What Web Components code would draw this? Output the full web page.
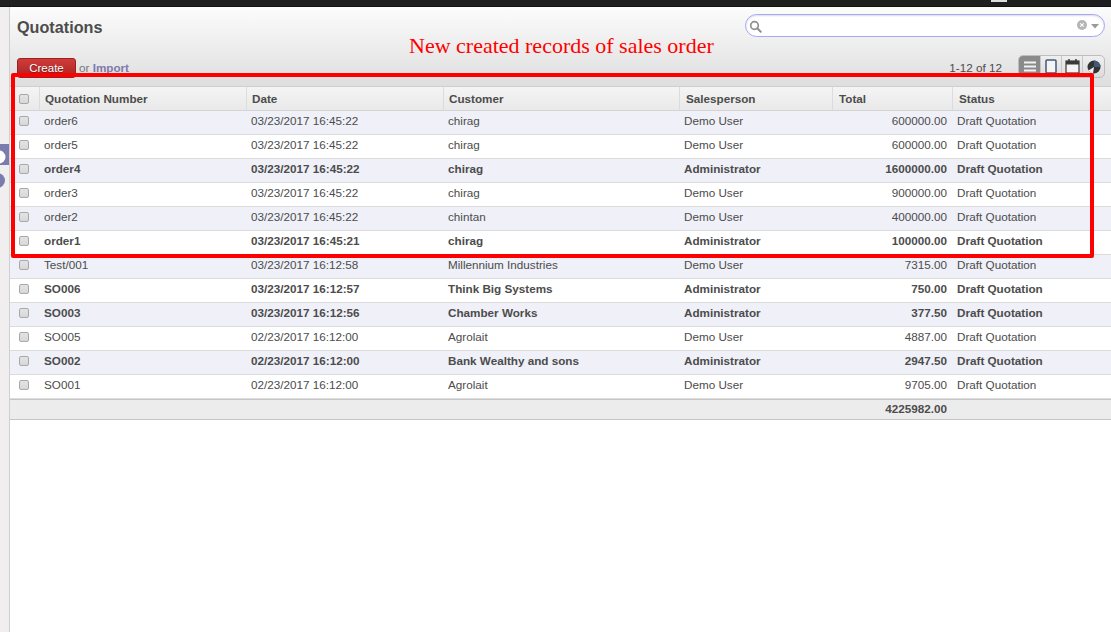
<!DOCTYPE html>
<html>
<head>
<meta charset="utf-8">
<title>Quotations</title>
<style>
  html, body { margin: 0; padding: 0; background: #fff; }
  body { font: 11.7px "Liberation Sans", Arial, sans-serif; color: #4c4c4c; height: 632px; overflow: hidden; }
</style>
</head>
<body>
<erp-app>
  <list-header title-text="Quotations"></list-header>
  <list-table></list-table>
</erp-app>

<script>
const ROWS = [
  ['order6', '03/23/2017 16:45:22', 'chirag', 'Demo User', '600000.00'],
  ['order5', '03/23/2017 16:45:22', 'chirag', 'Demo User', '600000.00'],
  ['order4', '03/23/2017 16:45:22', 'chirag', 'Administrator', '1600000.00', 1],
  ['order3', '03/23/2017 16:45:22', 'chirag', 'Demo User', '900000.00'],
  ['order2', '03/23/2017 16:45:22', 'chintan', 'Demo User', '400000.00'],
  ['order1', '03/23/2017 16:45:21', 'chirag', 'Administrator', '100000.00', 1],
  ['Test/001', '03/23/2017 16:12:58', 'Millennium Industries', 'Demo User', '7315.00'],
  ['SO006', '03/23/2017 16:12:57', 'Think Big Systems', 'Administrator', '750.00', 1],
  ['SO003', '03/23/2017 16:12:56', 'Chamber Works', 'Administrator', '377.50', 1],
  ['SO005', '02/23/2017 16:12:00', 'Agrolait', 'Demo User', '4887.00'],
  ['SO002', '02/23/2017 16:12:00', 'Bank Wealthy and sons', 'Administrator', '2947.50', 1],
  ['SO001', '02/23/2017 16:12:00', 'Agrolait', 'Demo User', '9705.00']
];
const COLS = 'grid-template-columns: 30px 207px 197px 236px 153px 120px 1fr;';
const HEAD_COLS = 'grid-template-columns: 29px 207px 197px 236px 153px 120px 1fr;';

class ErpApp extends HTMLElement {
  constructor() {
    super();
    this.attachShadow({mode: 'open'}).innerHTML = `
    <style>
      :host { display: block; position: relative; height: 632px; }
      #top { height: 6px; background: #1f1f1f; position: relative; border-bottom: 1px solid #111; }
      #top i { position: absolute; left: 991px; top: 0; width: 16px; height: 2px; background: #ddd; }
      #wrap { display: flex; height: 625px; }
      #side { width: 9px; flex: none; background: #f0eeee; border-right: 1px solid #cfcfcf; position: relative; overflow: hidden; }
      #side svg { position: absolute; left: 0; top: 137px; }
      #main { flex: 1; min-width: 0; }
      #mark { position: absolute; left: 11px; top: 73px; width: 1083px; height: 185px; box-sizing: border-box; border: 4px solid #fe0000; border-radius: 2px; }
      #note { position: absolute; left: 409px; top: 34px; font: 22px/24px "Liberation Serif", "Times New Roman", serif; color: #fe0000; white-space: nowrap; }
    </style>
    <div id="top"><i></i></div>
    <div id="wrap">
      <div id="side">
        <svg width="9" height="50" viewBox="0 0 9 50">
          <path d="M0 0H9V21H0Z" fill="#7c7bad"/>
          <circle cx="-1" cy="13" r="6.500" fill="#fff"/>
          <circle cx="-2.500" cy="36.500" r="7.500" fill="#7c7bad"/>
        </svg>
      </div>
      <div id="main"><slot></slot></div>
    </div>
    <div id="mark"></div>
    <div id="note">New created records of sales order</div>`;
  }
}
customElements.define('erp-app', ErpApp);

class ListHeader extends HTMLElement {
  connectedCallback() {
    this.attachShadow({mode: 'open'}).innerHTML = `
    <style>
      :host { display: flex; flex-direction: column; justify-content: space-between; box-sizing: border-box; height: 80px;
        padding: 7px 6px 7px 7px; background: linear-gradient(#fcfcfc, #dedede); border-bottom: 1px solid #cfcfcf; }
      .line { display: flex; justify-content: space-between; align-items: flex-start; }
      h2 { margin: 4px 0 0; font-size: 16.200px; line-height: 18px; font-weight: bold; color: #4c4c4c; }
      #search { width: 360px; height: 23px; box-sizing: border-box; border: 1px solid #a6a6fe; border-radius: 12px; background: #fff; position: relative; box-shadow: inset 0 1px 2px #ddd; }
      #search svg { position: absolute; }
      .left { display: flex; align-items: center; gap: 3px; }
      button { font: 11.500px "Liberation Sans", Arial, sans-serif; color: #fff; width: 59px; height: 20px; margin-top: 2px; padding: 0; border: 1px solid #9b2020; border-radius: 3px;
        background: linear-gradient(#d03c38, #aa2424); text-shadow: 0 1px 1px #6f1a1a; }
      .or { color: #777; }
      .or b { color: #7c7bad; }
      .right { display: flex; align-items: center; gap: 16px; }
      #views { display: flex; height: 21px; margin-bottom: 1px; border: 1px solid #bdbdbd; border-radius: 5px; overflow: hidden; background: linear-gradient(#efefef, #dcdcdc); }
      #views span { width: 21px; box-sizing: border-box; display: flex; align-items: center; justify-content: center; border-left: 1px solid #c6c6c6; }
      #views span:first-child { border-left: 0; background: #8a8a8a; }
      #views span:last-child { width: 22px; }
    </style>
    <div class="line">
      <h2>${this.getAttribute('title-text')}</h2>
      <div id="search">
        <svg style="left:3px;top:5px" width="13" height="13" viewBox="0 0 13 13"><circle cx="5.500" cy="5.500" r="3.800" fill="none" stroke="#8f8f8f" stroke-width="1.700"/><path d="M8.300 8.300L11.700 11.700" stroke="#8f8f8f" stroke-width="2" stroke-linecap="round"/></svg>
        <svg style="right:17px;top:5px" width="10" height="10" viewBox="0 0 10 10"><circle cx="5" cy="5" r="5" fill="#b5b5b5"/><path d="M3.300 3.300L6.700 6.700M6.700 3.300L3.300 6.700" stroke="#fff" stroke-width="1.100"/></svg>
        <svg style="right:5px;top:9px" width="8" height="5" viewBox="0 0 8 5"><path d="M0 0H8L4 4.500Z" fill="#9a9a9a"/></svg>
      </div>
    </div>
    <div class="line" style="align-items:center">
      <div class="left"><button>Create</button><span class="or">or <b>Import</b></span></div>
      <div class="right">
        <span>1-12 of 12</span>
        <div id="views">
          <span><svg width="12" height="11" viewBox="0 0 12 11"><path d="M0 1.500H12M0 5.500H12M0 9.500H12" stroke="#f2f2f2" stroke-width="2"/></svg></span>
          <span><svg width="12" height="15" viewBox="0 0 12 15"><rect x="1" y="1" width="10" height="13" rx="1" fill="#f4f4f4" stroke="#3f5a78" stroke-width="1.500"/></svg></span>
          <span><svg width="15" height="15" viewBox="0 0 15 15"><rect x="1" y="2" width="13" height="12" fill="#f4f4f4" stroke="#3a3a3a" stroke-width="1.200"/><rect x="1" y="2" width="13" height="3.500" fill="#3a3a3a"/><path d="M4 0V3M11 0V3" stroke="#3a3a3a" stroke-width="1.500"/></svg></span>
          <span><svg width="14" height="14" viewBox="0 0 14 14"><circle cx="7" cy="7" r="6.500" fill="#333"/><path d="M7 7V0.500A6.500 6.500 0 0 1 13.500 7Z" fill="#3f5a78"/><path d="M7 7L1.500 10.500A6.500 6.500 0 0 0 6 13.400Z" fill="#eee"/></svg></span>
        </div>
      </div>
    </div>`;
  }
}
customElements.define('list-header', ListHeader);

class ListCheck extends HTMLElement {
  constructor() {
    super();
    this.attachShadow({mode: 'open'}).innerHTML = `
    <style>
      :host { display: block; box-sizing: border-box; width: 10px; height: 10px; border: 1px solid #a8a8a8; border-radius: 2px; background: linear-gradient(#e4e4e4, #d8d8d8); }
    </style>`;
  }
}
customElements.define('list-check', ListCheck);

class ListRow extends HTMLElement {
  set data(r) {
    this.attachShadow({mode: 'open'}).innerHTML = `
    <style>
      :host { display: grid; ${COLS} height: 24px; box-sizing: border-box; padding-bottom: 3px; border-bottom: 1px solid #dcdcdc; align-items: center;
        font-weight: ${r[5] ? 'bold' : 'normal'}; color: #4c4c4c; }
      :host(:nth-child(odd)) { background: #eff0f8; }
      :host(:nth-child(even)) { background: #fff; }
      div { padding: 0 0 2px 4px; white-space: nowrap; }
      .c { padding: 0 0 0 9px; }
      .n { text-align: right; padding: 0 6px 2px 0; }
    </style>
    <div class="c"><list-check></list-check></div>
    <div>${r[0]}</div><div>${r[1]}</div><div>${r[2]}</div><div>${r[3]}</div>
    <div class="n">${r[4]}</div><div>Draft Quotation</div>`;
  }
}
customElements.define('list-row', ListRow);

class ListTable extends HTMLElement {
  connectedCallback() {
    const root = this.attachShadow({mode: 'open'});
    root.innerHTML = `
    <style>
      :host { display: block; }
      #head { display: grid; ${HEAD_COLS} height: 24px; box-sizing: border-box; align-items: center; font-weight: bold; color: #4c4c4c;
        background: linear-gradient(#f4f4f4, #e9e9e9); border-bottom: 1px solid #d3d3d3; }
      #head div { height: 100%; display: flex; align-items: center; padding-left: 5px; border-left: 1px solid #dcdcdc; box-sizing: border-box; }
      #head div:first-child { border-left: 0; padding-left: 9px; }
      #head div:nth-child(n+5) { padding-left: 6px; }
      #foot { display: grid; ${COLS} height: 21px; box-sizing: border-box; padding-bottom: 3px; align-items: center; font-weight: bold; background: #ececec; border-top: 1px solid #c6c6c6; border-bottom: 1px solid #c6c6c6; }
      #foot .n { grid-column: 6; text-align: right; padding-right: 6px; }
    </style>
    <div id="head">
      <div><list-check></list-check></div>
      <div>Quotation Number</div><div>Date</div><div>Customer</div><div>Salesperson</div><div>Total</div><div>Status</div>
    </div>
    <div id="body"></div>
    <div id="foot"><div class="n">4225982.00</div></div>`;
    const body = root.querySelector('#body');
    ROWS.forEach(r => {
      const row = document.createElement('list-row');
      row.data = r;
      body.appendChild(row);
    });
  }
}
customElements.define('list-table', ListTable);
</script>
</body>
</html>
